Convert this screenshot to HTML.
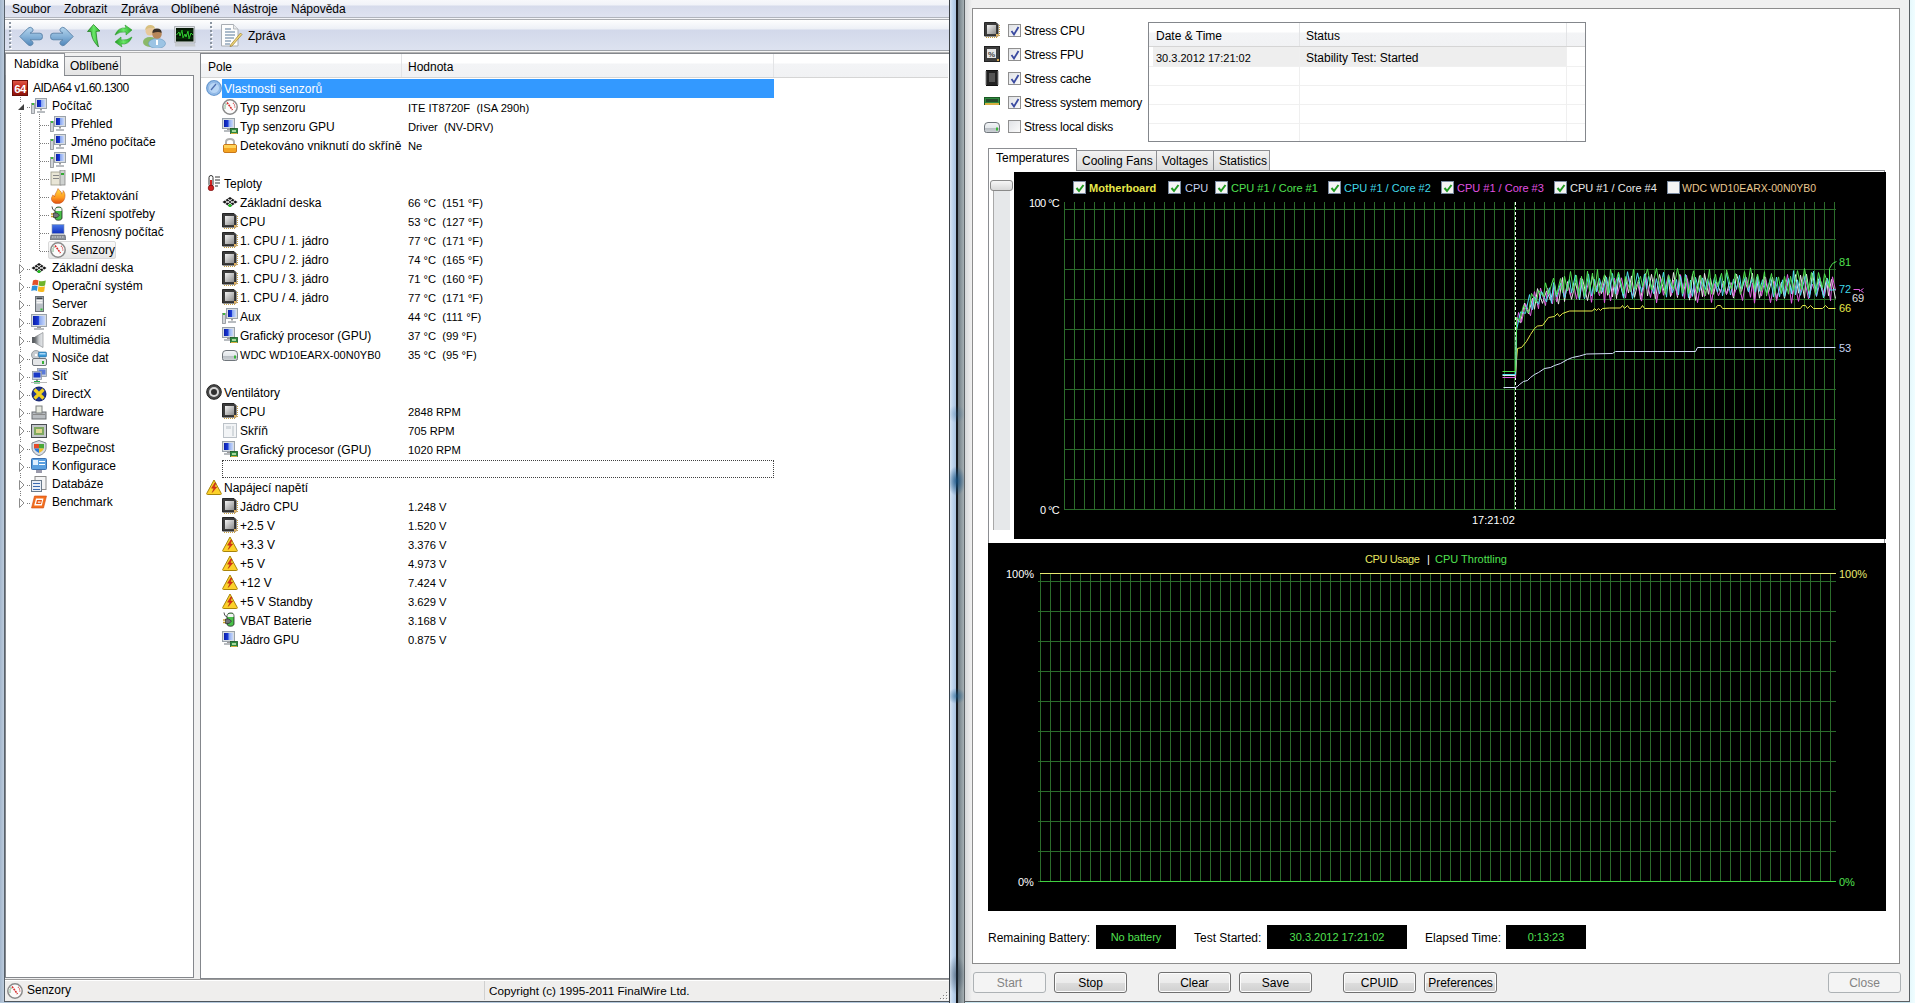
<!DOCTYPE html><html><head><meta charset="utf-8"><style>
*{margin:0;padding:0;box-sizing:border-box}
html,body{width:1915px;height:1003px;overflow:hidden;background:#f0f0f0}
body{position:relative;font-family:"Liberation Sans",sans-serif;font-size:12px;color:#000}
div{position:absolute}
.t{white-space:pre;line-height:15px;font-size:12px}
.s{white-space:pre;line-height:13px;font-size:11px}
.btn{border:1px solid #707070;border-radius:3px;background:linear-gradient(#f2f2f2 0%,#ebebeb 50%,#dddddd 51%,#cfcfcf 100%);text-align:center;line-height:21px;font-size:12px;box-shadow:inset 0 0 0 1px #fcfcfc}
.btnd{border:1px solid #adb2b5;border-radius:3px;background:#f4f4f4;color:#838383;text-align:center;line-height:21px;font-size:12px}
.cb{width:13px;height:13px;border:1px solid #8e8f8f;background:linear-gradient(135deg,#dcdcdc,#fdfdfd)}
.cbk{width:13px;height:13px;border:1px solid #1c1c1c;background:#f4f4f4;box-shadow:inset 0 0 0 1px #c8c8c8}
svg{position:absolute;left:0;top:0}
</style></head><body><div class="" style="left:0px;top:0px;width:4px;height:1003px;background:linear-gradient(90deg,#a3b6cc,#bccbdc)"></div>
<div class="" style="left:4px;top:0px;width:1px;height:1003px;background:#56606a"></div>
<div class="" style="left:5px;top:0px;width:944px;height:17px;background:linear-gradient(#f7f8fb 0,#f1f3f8 5px,#d6dbeb 6px,#dfe3f0 17px)"></div>
<div class="" style="left:5px;top:17px;width:944px;height:1px;background:#b1b5bd"></div>
<div class="" style="left:5px;top:18px;width:944px;height:1px;background:#f4f5f8"></div>
<div class="" style="left:5px;top:19px;width:944px;height:1px;background:#a9acb1"></div>
<div class="t" style="left:12px;top:2px;">Soubor</div>
<div class="t" style="left:64px;top:2px;">Zobrazit</div>
<div class="t" style="left:121px;top:2px;">Zpráva</div>
<div class="t" style="left:171px;top:2px;">Oblíbené</div>
<div class="t" style="left:233px;top:2px;">Nástroje</div>
<div class="t" style="left:291px;top:2px;">Nápověda</div>
<div class="" style="left:5px;top:20px;width:944px;height:30px;background:linear-gradient(#fefefe 0,#edf0f6 9px,#d2d8ea 10px,#dde2f0 30px)"></div>
<div class="" style="left:5px;top:50px;width:944px;height:1px;background:#9ea2a9"></div>
<div class="" style="left:5px;top:51px;width:944px;height:1px;background:#f6f6f6"></div>
<div class="" style="left:5px;top:52px;width:944px;height:1px;background:#b4b4b4"></div>
<div class="t" style="left:248px;top:29px;">Zpráva</div>
<div class="" style="left:64px;top:56px;width:57px;height:20px;background:linear-gradient(#f3f3f3,#e3e3e3);border:1px solid #8e9196;border-bottom:none"></div>
<div class="t" style="left:70px;top:59px;">Oblíbené</div>
<div class="" style="left:5px;top:53px;width:60px;height:23px;background:#fff;border:1px solid #8e9196;border-bottom:none"></div>
<div class="" style="left:5px;top:75px;width:189px;height:903px;background:#fff;border:1px solid #84878c"></div>
<div class="" style="left:6px;top:75px;width:58px;height:1px;background:#fff"></div>
<div class="t" style="left:14px;top:57px;">Nabídka</div>
<div class="" style="left:200px;top:53px;width:749px;height:926px;background:#fff;border:1px solid #84878c;border-right:none"></div>
<div class="" style="left:201px;top:54px;width:747px;height:24px;background:linear-gradient(#ffffff 0,#ffffff 9px,#f3f4f6 10px,#f1f2f4 23px);border-bottom:1px solid #d5d5d5"></div>
<div class="" style="left:401px;top:54px;width:1px;height:23px;background:#e3e4e6"></div>
<div class="" style="left:773px;top:54px;width:1px;height:23px;background:#e3e4e6"></div>
<div class="t" style="left:208px;top:60px;">Pole</div>
<div class="t" style="left:408px;top:60px;">Hodnota</div>
<div class="" style="left:5px;top:979px;width:944px;height:1px;background:#9a9a9a"></div>
<div class="" style="left:5px;top:980px;width:944px;height:1px;background:#ffffff"></div>
<div class="" style="left:5px;top:981px;width:944px;height:20px;background:#efeeed"></div>
<div class="" style="left:484px;top:981px;width:1px;height:19px;background:#d0d0d0"></div>
<div class="t" style="left:27px;top:983px;">Senzory</div>
<div class="t" style="left:489px;top:983px;font-size:11.7px">Copyright (c) 1995-2011 FinalWire Ltd.</div>
<div class="" style="left:4px;top:1001px;width:945px;height:1px;background:#4e565e"></div>
<div class="" style="left:0px;top:1002px;width:949px;height:1px;background:#b4c8dc"></div>
<div class="" style="left:949px;top:0px;width:1px;height:1003px;background:#3a4046"></div>
<div class="" style="left:950px;top:0px;width:6px;height:1003px;background:linear-gradient(90deg,#dbe8f6,#bcd3ec 50%,#a9c2de)"></div>
<div class="" style="left:956px;top:0px;width:2px;height:1003px;background:#15181b"></div>
<div class="" style="left:958px;top:0px;width:6px;height:1003px;background:linear-gradient(90deg,#6d7a82,#a6b0b4)"></div>
<div class="" style="left:964px;top:0px;width:1px;height:1003px;background:#5c6266"></div>
<div class="" style="left:949px;top:466px;width:15px;height:30px;background:radial-gradient(ellipse 60% 50% at 50% 50%,rgba(20,80,130,0.85),rgba(20,80,130,0) 100%)"></div>
<div class="" style="left:949px;top:688px;width:15px;height:16px;background:radial-gradient(ellipse 60% 50% at 50% 50%,rgba(20,90,140,0.6),rgba(20,90,140,0) 100%)"></div>
<div class="" style="left:949px;top:405px;width:15px;height:18px;background:radial-gradient(ellipse 60% 50% at 50% 50%,rgba(40,100,150,0.3),rgba(40,100,150,0) 100%)"></div>
<div class="" style="left:949px;top:955px;width:15px;height:40px;background:radial-gradient(ellipse 60% 50% at 50% 50%,rgba(30,50,70,0.5),rgba(30,50,70,0) 100%)"></div>
<div style="left:20px;top:97px;width:1px;height:405px;background:repeating-linear-gradient(#7c7c7c 0 1px,transparent 1px 2px)"></div>
<div style="left:39px;top:114px;width:1px;height:138px;background:repeating-linear-gradient(#7c7c7c 0 1px,transparent 1px 2px)"></div>
<div class="" style="left:48px;top:241px;width:68px;height:18px;border:1px solid #d9d9d9;border-radius:2px;background:linear-gradient(#fafafa,#e6e6e6)"></div>
<svg style="left:12px;top:80px" width="16" height="16" viewBox="0 0 16 16"><defs><linearGradient id="ag64" x1="0" y1="0" x2="0" y2="1"><stop offset="0" stop-color="#e05a4a"/><stop offset="0.45" stop-color="#c0281c"/><stop offset="1" stop-color="#8a1208"/></linearGradient></defs><rect x="0.5" y="0.5" width="15" height="15" fill="url(#ag64)" stroke="#6a0e08"/><text x="8" y="13" font-family="Liberation Sans" font-weight="bold" font-size="11.5" fill="#fff" text-anchor="middle" letter-spacing="-0.6">64</text></svg>
<div class="t" style="left:33px;top:81px;letter-spacing:-0.5px">AIDA64 v1.60.1300</div>
<div style="left:21px;top:107px;width:10px;height:1px;background:repeating-linear-gradient(90deg,#7c7c7c 0 1px,transparent 1px 2px)"></div>
<svg style="left:31px;top:98px" width="16" height="16" viewBox="0 0 16 16"><defs><linearGradient id="scr2" x1="0" y1="0" x2="1" y2="0"><stop offset="0" stop-color="#0a1ea8"/><stop offset="0.45" stop-color="#1a3ad8"/><stop offset="0.55" stop-color="#8aa8f0"/><stop offset="1" stop-color="#c8d8fa"/></linearGradient></defs><rect x="0.5" y="5.5" width="3" height="10" fill="#d0d4d8" stroke="#8a9096" stroke-width="0.8"/><rect x="1" y="5" width="2" height="2" fill="#3cb83c"/><rect x="4.5" y="0.5" width="11" height="10" fill="#d8dde2" stroke="#9aa2aa" stroke-width="1"/><rect x="6" y="2" width="8" height="7" fill="url(#scr2)"/><rect x="9" y="11" width="2" height="1.5" fill="#9a9a9a"/><rect x="6" y="13" width="8" height="2" fill="#b8bcc0"/></svg>
<div class="t" style="left:52px;top:99px;">Počítač</div>
<svg style="left:16px;top:102px" width="10" height="10" viewBox="0 0 10 10"><rect width="10" height="10" fill="#fff"/><path d="M8 2 V8 H2Z" fill="#404040"/></svg>
<div style="left:40px;top:125px;width:10px;height:1px;background:repeating-linear-gradient(90deg,#7c7c7c 0 1px,transparent 1px 2px)"></div>
<svg style="left:50px;top:116px" width="16" height="16" viewBox="0 0 16 16"><defs><linearGradient id="scr2" x1="0" y1="0" x2="1" y2="0"><stop offset="0" stop-color="#0a1ea8"/><stop offset="0.45" stop-color="#1a3ad8"/><stop offset="0.55" stop-color="#8aa8f0"/><stop offset="1" stop-color="#c8d8fa"/></linearGradient></defs><rect x="0.5" y="5.5" width="3" height="10" fill="#d0d4d8" stroke="#8a9096" stroke-width="0.8"/><rect x="1" y="5" width="2" height="2" fill="#3cb83c"/><rect x="4.5" y="0.5" width="11" height="10" fill="#d8dde2" stroke="#9aa2aa" stroke-width="1"/><rect x="6" y="2" width="8" height="7" fill="url(#scr2)"/><rect x="9" y="11" width="2" height="1.5" fill="#9a9a9a"/><rect x="6" y="13" width="8" height="2" fill="#b8bcc0"/></svg>
<div class="t" style="left:71px;top:117px;">Přehled</div>
<div style="left:40px;top:143px;width:10px;height:1px;background:repeating-linear-gradient(90deg,#7c7c7c 0 1px,transparent 1px 2px)"></div>
<svg style="left:50px;top:134px" width="16" height="16" viewBox="0 0 16 16"><defs><linearGradient id="scr2" x1="0" y1="0" x2="1" y2="0"><stop offset="0" stop-color="#0a1ea8"/><stop offset="0.45" stop-color="#1a3ad8"/><stop offset="0.55" stop-color="#8aa8f0"/><stop offset="1" stop-color="#c8d8fa"/></linearGradient></defs><rect x="0.5" y="5.5" width="3" height="10" fill="#d0d4d8" stroke="#8a9096" stroke-width="0.8"/><rect x="1" y="5" width="2" height="2" fill="#3cb83c"/><rect x="4.5" y="0.5" width="11" height="10" fill="#d8dde2" stroke="#9aa2aa" stroke-width="1"/><rect x="6" y="2" width="8" height="7" fill="url(#scr2)"/><rect x="9" y="11" width="2" height="1.5" fill="#9a9a9a"/><rect x="6" y="13" width="8" height="2" fill="#b8bcc0"/></svg>
<div class="t" style="left:71px;top:135px;">Jméno počítače</div>
<div style="left:40px;top:161px;width:10px;height:1px;background:repeating-linear-gradient(90deg,#7c7c7c 0 1px,transparent 1px 2px)"></div>
<svg style="left:50px;top:152px" width="16" height="16" viewBox="0 0 16 16"><defs><linearGradient id="scr2" x1="0" y1="0" x2="1" y2="0"><stop offset="0" stop-color="#0a1ea8"/><stop offset="0.45" stop-color="#1a3ad8"/><stop offset="0.55" stop-color="#8aa8f0"/><stop offset="1" stop-color="#c8d8fa"/></linearGradient></defs><rect x="0.5" y="5.5" width="3" height="10" fill="#d0d4d8" stroke="#8a9096" stroke-width="0.8"/><rect x="1" y="5" width="2" height="2" fill="#3cb83c"/><rect x="4.5" y="0.5" width="11" height="10" fill="#d8dde2" stroke="#9aa2aa" stroke-width="1"/><rect x="6" y="2" width="8" height="7" fill="url(#scr2)"/><rect x="9" y="11" width="2" height="1.5" fill="#9a9a9a"/><rect x="6" y="13" width="8" height="2" fill="#b8bcc0"/></svg>
<div class="t" style="left:71px;top:153px;">DMI</div>
<div style="left:40px;top:179px;width:10px;height:1px;background:repeating-linear-gradient(90deg,#7c7c7c 0 1px,transparent 1px 2px)"></div>
<svg style="left:50px;top:170px" width="16" height="16" viewBox="0 0 16 16"><rect x="1" y="2" width="10" height="13" fill="#e9e6d6" stroke="#9a9a88" stroke-width="0.8"/><rect x="3" y="5" width="6" height="1" fill="#888"/><rect x="3" y="8" width="6" height="1" fill="#888"/><rect x="10" y="0" width="5" height="15" fill="#cfd2d0" stroke="#888" stroke-width="0.8"/><rect x="11" y="3" width="3" height="2" fill="#3a3"/></svg>
<div class="t" style="left:71px;top:171px;">IPMI</div>
<div style="left:40px;top:197px;width:10px;height:1px;background:repeating-linear-gradient(90deg,#7c7c7c 0 1px,transparent 1px 2px)"></div>
<svg style="left:50px;top:188px" width="16" height="16" viewBox="0 0 16 16"><defs><linearGradient id="fl" x1="0" y1="0" x2="0" y2="1"><stop offset="0" stop-color="#ffe040"/><stop offset="0.6" stop-color="#ff9a20"/><stop offset="1" stop-color="#e05010"/></linearGradient></defs><path d="M8 0.5 C9 3 12 3 11.5 6 C13 5 13.5 3.5 13 2.5 C15.5 5 15.5 9 14 12 C12.5 15 9 16 6 15.5 C3 15 1 12.5 1.5 10 C2 8 3 8 2.5 7 C4 7.5 4.5 8.5 4.5 9 C4.5 6 7 4 8 0.5Z" fill="url(#fl)" stroke="#c04810" stroke-width="0.5"/></svg>
<div class="t" style="left:71px;top:189px;">Přetaktování</div>
<div style="left:40px;top:215px;width:10px;height:1px;background:repeating-linear-gradient(90deg,#7c7c7c 0 1px,transparent 1px 2px)"></div>
<svg style="left:50px;top:206px" width="16" height="16" viewBox="0 0 16 16"><path d="M9 1 C5 1 5 3 5 6 V12 C5 15 12 15 12 12 V6 C12 3 12 1 9 1Z" fill="#48c048" stroke="#222" stroke-width="0.8"/><path d="M5.5 2.5 C7 1.5 11 1.5 11.5 2.5 V5 H5.5Z" fill="#f4f4f4"/><path d="M1 8 H4 M1 10.5 H4" stroke="#c8a030" stroke-width="1.4"/><path d="M3.5 7 H7 L9.5 9.2 L7 11.5 H3.5Z" fill="#707478" stroke="#222" stroke-width="0.6"/><path d="M2 0.5 Q2 4 5 5" fill="none" stroke="#222" stroke-width="0.8"/></svg>
<div class="t" style="left:71px;top:207px;">Řízení spotřeby</div>
<div style="left:40px;top:233px;width:10px;height:1px;background:repeating-linear-gradient(90deg,#7c7c7c 0 1px,transparent 1px 2px)"></div>
<svg style="left:50px;top:224px" width="16" height="16" viewBox="0 0 16 16"><defs><linearGradient id="lap" x1="0" y1="0" x2="0" y2="1"><stop offset="0" stop-color="#4a7ae8"/><stop offset="1" stop-color="#1030c0"/></linearGradient></defs><rect x="2" y="0.5" width="12" height="9" fill="url(#lap)" stroke="#8a98b0" stroke-width="0.6"/><path d="M1 11 H15 L16 15.5 H0Z" fill="#8a9098" stroke="#50565c" stroke-width="0.6"/><path d="M2 13 H14" stroke="#d8d8d8" stroke-width="1" stroke-dasharray="1.5,1"/></svg>
<div class="t" style="left:71px;top:225px;">Přenosný počítač</div>
<div style="left:40px;top:251px;width:10px;height:1px;background:repeating-linear-gradient(90deg,#7c7c7c 0 1px,transparent 1px 2px)"></div>
<svg style="left:50px;top:242px" width="16" height="16" viewBox="0 0 16 16"><circle cx="8" cy="8" r="7.2" fill="#fbfbfb" stroke="#8a8a8a" stroke-width="1.5"/><path d="M3.2 9.5 A5 5 0 0 1 4.5 4.5" fill="none" stroke="#3a8a4a" stroke-width="1.2" stroke-dasharray="1,1"/><path d="M11 4 A5 5 0 0 1 12.8 8.5" fill="none" stroke="#d04040" stroke-width="1.2" stroke-dasharray="1,1"/><path d="M5 3.5 L10.5 11" stroke="#d83030" stroke-width="1.6" stroke-dasharray="2,0.8"/></svg>
<div class="t" style="left:71px;top:243px;">Senzory</div>
<div style="left:21px;top:269px;width:10px;height:1px;background:repeating-linear-gradient(90deg,#7c7c7c 0 1px,transparent 1px 2px)"></div>
<svg style="left:31px;top:260px" width="16" height="16" viewBox="0 0 16 16"><path d="M0.5 8 L8 3 L15.5 8 L8 13Z" fill="#151515"/><path d="M3 6.3 L10.5 11.3 M5.5 4.7 L13 9.7 M5.5 11.3 L13 6.3 M3 9.7 L10.5 4.7" stroke="#e8e8e8" stroke-width="1"/><circle cx="8" cy="11.5" r="1.6" fill="#22c022"/></svg>
<div class="t" style="left:52px;top:261px;">Základní deska</div>
<svg style="left:17px;top:263px" width="9" height="11" viewBox="0 0 9 11"><rect x="0" y="0" width="9" height="11" fill="#fff"/><path d="M2.5 1.5 L7 6 L2.5 10.5Z" fill="#fff" stroke="#8c8c8c" stroke-width="1"/></svg>
<div style="left:21px;top:287px;width:10px;height:1px;background:repeating-linear-gradient(90deg,#7c7c7c 0 1px,transparent 1px 2px)"></div>
<svg style="left:31px;top:278px" width="16" height="16" viewBox="0 0 16 16"><path d="M2 2.5 Q4.5 1 7.5 2.5 L6.8 7.3 Q4 6 1.2 7.3Z" fill="#e2512a"/><path d="M8.2 2.8 Q11 4 14.8 2.5 L14 7.6 Q10.8 8.8 7.5 7.5Z" fill="#6fb42c"/><path d="M1 8 Q3.8 6.8 6.6 8 L6 13 Q3.5 11.7 0.3 13Z" fill="#2d8fd8"/><path d="M7.4 8.3 Q10.5 9.5 13.9 8.3 L13.2 13.4 Q10 14.6 6.8 13.2Z" fill="#f6b81c"/></svg>
<div class="t" style="left:52px;top:279px;">Operační systém</div>
<svg style="left:17px;top:281px" width="9" height="11" viewBox="0 0 9 11"><rect x="0" y="0" width="9" height="11" fill="#fff"/><path d="M2.5 1.5 L7 6 L2.5 10.5Z" fill="#fff" stroke="#8c8c8c" stroke-width="1"/></svg>
<div style="left:21px;top:305px;width:10px;height:1px;background:repeating-linear-gradient(90deg,#7c7c7c 0 1px,transparent 1px 2px)"></div>
<svg style="left:31px;top:296px" width="16" height="16" viewBox="0 0 16 16"><rect x="4.5" y="0.5" width="8" height="15" fill="#b8bec4" stroke="#6a7076" stroke-width="1"/><rect x="5.5" y="1.5" width="6" height="1.5" fill="#3a4046"/><rect x="5.5" y="4" width="6" height="1.5" fill="#f4f4f4"/><rect x="5.5" y="6" width="6" height="1.5" fill="#f4f4f4"/><rect x="9.5" y="12.5" width="2" height="2" fill="#38c038"/></svg>
<div class="t" style="left:52px;top:297px;">Server</div>
<svg style="left:17px;top:299px" width="9" height="11" viewBox="0 0 9 11"><rect x="0" y="0" width="9" height="11" fill="#fff"/><path d="M2.5 1.5 L7 6 L2.5 10.5Z" fill="#fff" stroke="#8c8c8c" stroke-width="1"/></svg>
<div style="left:21px;top:323px;width:10px;height:1px;background:repeating-linear-gradient(90deg,#7c7c7c 0 1px,transparent 1px 2px)"></div>
<svg style="left:31px;top:314px" width="16" height="16" viewBox="0 0 16 16"><defs><linearGradient id="scr" x1="0" y1="0" x2="1" y2="0"><stop offset="0" stop-color="#0a1ea8"/><stop offset="0.45" stop-color="#1a3ad8"/><stop offset="0.55" stop-color="#8aa8f0"/><stop offset="1" stop-color="#c8d8fa"/></linearGradient></defs><rect x="0.5" y="0.5" width="15" height="12" fill="#d8dde2" stroke="#9aa2aa" stroke-width="1"/><rect x="2" y="2" width="12" height="9" fill="url(#scr)"/><rect x="6" y="13" width="4" height="1" fill="#9a9a9a"/><rect x="3" y="14" width="10" height="2" fill="#b8bcc0"/></svg>
<div class="t" style="left:52px;top:315px;">Zobrazení</div>
<svg style="left:17px;top:317px" width="9" height="11" viewBox="0 0 9 11"><rect x="0" y="0" width="9" height="11" fill="#fff"/><path d="M2.5 1.5 L7 6 L2.5 10.5Z" fill="#fff" stroke="#8c8c8c" stroke-width="1"/></svg>
<div style="left:21px;top:341px;width:10px;height:1px;background:repeating-linear-gradient(90deg,#7c7c7c 0 1px,transparent 1px 2px)"></div>
<svg style="left:31px;top:332px" width="16" height="16" viewBox="0 0 16 16"><defs><linearGradient id="spk" x1="0" y1="0" x2="1" y2="0"><stop offset="0" stop-color="#606468"/><stop offset="0.5" stop-color="#c8ccd0"/><stop offset="1" stop-color="#e8eaec"/></linearGradient></defs><rect x="1" y="5" width="4" height="6" fill="#5a5e62"/><path d="M4 5 L12 0.5 V15.5 L4 11Z" fill="url(#spk)" stroke="#7a7e82" stroke-width="0.6"/></svg>
<div class="t" style="left:52px;top:333px;">Multimédia</div>
<svg style="left:17px;top:335px" width="9" height="11" viewBox="0 0 9 11"><rect x="0" y="0" width="9" height="11" fill="#fff"/><path d="M2.5 1.5 L7 6 L2.5 10.5Z" fill="#fff" stroke="#8c8c8c" stroke-width="1"/></svg>
<div style="left:21px;top:359px;width:10px;height:1px;background:repeating-linear-gradient(90deg,#7c7c7c 0 1px,transparent 1px 2px)"></div>
<svg style="left:31px;top:350px" width="16" height="16" viewBox="0 0 16 16"><circle cx="5" cy="5" r="4.5" fill="#c8ccd0" stroke="#8a9096" stroke-width="0.8"/><circle cx="5" cy="5" r="1.2" fill="#fff"/><rect x="7.5" y="2" width="8" height="5" rx="1" fill="#3a9ad8" stroke="#2a6a9a" stroke-width="0.6"/><rect x="8.5" y="3" width="6" height="1.5" fill="#a8d8f8"/><rect x="1.5" y="8.5" width="14" height="7" rx="1.5" fill="#e4e6e8" stroke="#70767c" stroke-width="1"/><rect x="11" y="11" width="2" height="3" fill="#38b038"/></svg>
<div class="t" style="left:52px;top:351px;">Nosiče dat</div>
<svg style="left:17px;top:353px" width="9" height="11" viewBox="0 0 9 11"><rect x="0" y="0" width="9" height="11" fill="#fff"/><path d="M2.5 1.5 L7 6 L2.5 10.5Z" fill="#fff" stroke="#8c8c8c" stroke-width="1"/></svg>
<div style="left:21px;top:377px;width:10px;height:1px;background:repeating-linear-gradient(90deg,#7c7c7c 0 1px,transparent 1px 2px)"></div>
<svg style="left:31px;top:368px" width="16" height="16" viewBox="0 0 16 16"><rect x="6.5" y="0.5" width="9" height="8" fill="#c8d0dc" stroke="#8a96a4" stroke-width="0.8"/><rect x="7.5" y="1.5" width="7" height="5" fill="#5a7ad8"/><rect x="1.5" y="3.5" width="9" height="8" fill="#d0d8e4" stroke="#8a96a4" stroke-width="0.8"/><rect x="2.5" y="4.5" width="7" height="5" fill="#1a3ac8"/><rect x="5" y="11.5" width="2" height="2" fill="#888"/><rect x="3" y="13" width="6" height="2.5" fill="#22a848"/><path d="M0 14.5 H16" stroke="#b8b8b8" stroke-width="1"/></svg>
<div class="t" style="left:52px;top:369px;">Síť</div>
<svg style="left:17px;top:371px" width="9" height="11" viewBox="0 0 9 11"><rect x="0" y="0" width="9" height="11" fill="#fff"/><path d="M2.5 1.5 L7 6 L2.5 10.5Z" fill="#fff" stroke="#8c8c8c" stroke-width="1"/></svg>
<div style="left:21px;top:395px;width:10px;height:1px;background:repeating-linear-gradient(90deg,#7c7c7c 0 1px,transparent 1px 2px)"></div>
<svg style="left:31px;top:386px" width="16" height="16" viewBox="0 0 16 16"><circle cx="8" cy="8" r="7.5" fill="#1a2a78"/><circle cx="8" cy="8" r="6" fill="#223a9a"/><path d="M3.5 3.5 L12.5 12.5 M12.5 3.5 L3.5 12.5" stroke="#f0d020" stroke-width="3.2"/></svg>
<div class="t" style="left:52px;top:387px;">DirectX</div>
<svg style="left:17px;top:389px" width="9" height="11" viewBox="0 0 9 11"><rect x="0" y="0" width="9" height="11" fill="#fff"/><path d="M2.5 1.5 L7 6 L2.5 10.5Z" fill="#fff" stroke="#8c8c8c" stroke-width="1"/></svg>
<div style="left:21px;top:413px;width:10px;height:1px;background:repeating-linear-gradient(90deg,#7c7c7c 0 1px,transparent 1px 2px)"></div>
<svg style="left:31px;top:404px" width="16" height="16" viewBox="0 0 16 16"><rect x="1" y="8" width="14" height="7" fill="#b8bcc0" stroke="#6a6e72" stroke-width="1"/><rect x="5" y="2" width="6" height="7" fill="#e8ebe0" stroke="#7d8080" stroke-width="1"/><rect x="2" y="10" width="12" height="1" fill="#888"/></svg>
<div class="t" style="left:52px;top:405px;">Hardware</div>
<svg style="left:17px;top:407px" width="9" height="11" viewBox="0 0 9 11"><rect x="0" y="0" width="9" height="11" fill="#fff"/><path d="M2.5 1.5 L7 6 L2.5 10.5Z" fill="#fff" stroke="#8c8c8c" stroke-width="1"/></svg>
<div style="left:21px;top:431px;width:10px;height:1px;background:repeating-linear-gradient(90deg,#7c7c7c 0 1px,transparent 1px 2px)"></div>
<svg style="left:31px;top:422px" width="16" height="16" viewBox="0 0 16 16"><rect x="0.5" y="2.5" width="15" height="13" fill="#c4c8cc" stroke="#4a4e52" stroke-width="1"/><rect x="3" y="5" width="10" height="8" fill="#7fa860"/><rect x="5" y="7" width="6" height="4" fill="#e0d890"/></svg>
<div class="t" style="left:52px;top:423px;">Software</div>
<svg style="left:17px;top:425px" width="9" height="11" viewBox="0 0 9 11"><rect x="0" y="0" width="9" height="11" fill="#fff"/><path d="M2.5 1.5 L7 6 L2.5 10.5Z" fill="#fff" stroke="#8c8c8c" stroke-width="1"/></svg>
<div style="left:21px;top:449px;width:10px;height:1px;background:repeating-linear-gradient(90deg,#7c7c7c 0 1px,transparent 1px 2px)"></div>
<svg style="left:31px;top:440px" width="16" height="16" viewBox="0 0 16 16"><path d="M8 0.5 L15 3 V8 C15 12 11 15 8 15.5 C5 15 1 12 1 8 V3Z" fill="#d8dde4" stroke="#7d8690" stroke-width="1"/><path d="M3 4 H8 V8.5 H3Z" fill="#e64a2a"/><path d="M8 4 H13 V8.5 H8Z" fill="#4aa83a"/><path d="M3 8.5 H8 V13 Q4 11 3 8.5Z" fill="#2a7ad8"/><path d="M8 8.5 H13 Q12 11 8 13Z" fill="#f2c028"/></svg>
<div class="t" style="left:52px;top:441px;">Bezpečnost</div>
<svg style="left:17px;top:443px" width="9" height="11" viewBox="0 0 9 11"><rect x="0" y="0" width="9" height="11" fill="#fff"/><path d="M2.5 1.5 L7 6 L2.5 10.5Z" fill="#fff" stroke="#8c8c8c" stroke-width="1"/></svg>
<div style="left:21px;top:467px;width:10px;height:1px;background:repeating-linear-gradient(90deg,#7c7c7c 0 1px,transparent 1px 2px)"></div>
<svg style="left:31px;top:458px" width="16" height="16" viewBox="0 0 16 16"><rect x="0.5" y="0.5" width="15" height="11" rx="1" fill="#5ba0e0" stroke="#3a70b0" stroke-width="1"/><rect x="2" y="2" width="5" height="5" fill="#dfefff"/><rect x="8" y="3" width="6" height="1" fill="#fff"/><rect x="8" y="6" width="6" height="1" fill="#fff"/><rect x="5" y="12" width="6" height="3" fill="#99a"/></svg>
<div class="t" style="left:52px;top:459px;">Konfigurace</div>
<svg style="left:17px;top:461px" width="9" height="11" viewBox="0 0 9 11"><rect x="0" y="0" width="9" height="11" fill="#fff"/><path d="M2.5 1.5 L7 6 L2.5 10.5Z" fill="#fff" stroke="#8c8c8c" stroke-width="1"/></svg>
<div style="left:21px;top:485px;width:10px;height:1px;background:repeating-linear-gradient(90deg,#7c7c7c 0 1px,transparent 1px 2px)"></div>
<svg style="left:31px;top:476px" width="16" height="16" viewBox="0 0 16 16"><rect x="4" y="0.5" width="11" height="13" fill="#f4f4f4" stroke="#8a8a8a" stroke-width="1"/><rect x="0.5" y="4.5" width="10" height="11" fill="#e8eef6" stroke="#6a7a8a" stroke-width="1"/><rect x="2" y="7" width="7" height="1" fill="#3a6ab0"/><rect x="2" y="10" width="7" height="1" fill="#3a6ab0"/><rect x="2" y="13" width="7" height="1" fill="#3a6ab0"/></svg>
<div class="t" style="left:52px;top:477px;">Databáze</div>
<svg style="left:17px;top:479px" width="9" height="11" viewBox="0 0 9 11"><rect x="0" y="0" width="9" height="11" fill="#fff"/><path d="M2.5 1.5 L7 6 L2.5 10.5Z" fill="#fff" stroke="#8c8c8c" stroke-width="1"/></svg>
<div style="left:21px;top:503px;width:10px;height:1px;background:repeating-linear-gradient(90deg,#7c7c7c 0 1px,transparent 1px 2px)"></div>
<svg style="left:31px;top:494px" width="16" height="16" viewBox="0 0 16 16"><path d="M3.5 2 H15.5 L12.5 14 H0.5Z" fill="#f36f1e" stroke="#d04a10" stroke-width="0.6"/><path d="M5 4.5 H12.5 L10.8 11.5 H3.2Z" fill="#fff"/><path d="M6 6 H11 L10 10 H5Z" fill="#e85a18"/><rect x="6.8" y="7.5" width="2.8" height="1.2" fill="#fff"/></svg>
<div class="t" style="left:52px;top:495px;">Benchmark</div>
<svg style="left:17px;top:497px" width="9" height="11" viewBox="0 0 9 11"><rect x="0" y="0" width="9" height="11" fill="#fff"/><path d="M2.5 1.5 L7 6 L2.5 10.5Z" fill="#fff" stroke="#8c8c8c" stroke-width="1"/></svg>
<div class="" style="left:222px;top:79px;width:552px;height:19px;background:#3399ff"></div>
<svg style="left:206px;top:80px" width="16" height="16" viewBox="0 0 16 16"><circle cx="8" cy="8" r="7.3" fill="#9cc4f0" stroke="#6a9ad0" stroke-width="1.3"/><circle cx="8" cy="8" r="5.5" fill="#b8d6f6" stroke="#80a8d8" stroke-width="0.6"/><path d="M5 10 L10 4" stroke="#5070b0" stroke-width="1.3"/></svg>
<div class="t" style="left:224px;top:82px;color:#fff">Vlastnosti senzorů</div>
<svg style="left:222px;top:99px" width="16" height="16" viewBox="0 0 16 16"><circle cx="8" cy="8" r="7.2" fill="#fbfbfb" stroke="#8a8a8a" stroke-width="1.5"/><path d="M3.2 9.5 A5 5 0 0 1 4.5 4.5" fill="none" stroke="#3a8a4a" stroke-width="1.2" stroke-dasharray="1,1"/><path d="M11 4 A5 5 0 0 1 12.8 8.5" fill="none" stroke="#d04040" stroke-width="1.2" stroke-dasharray="1,1"/><path d="M5 3.5 L10.5 11" stroke="#d83030" stroke-width="1.6" stroke-dasharray="2,0.8"/></svg>
<div class="t" style="left:240px;top:101px;">Typ senzoru</div>
<div class="t" style="left:408px;top:101px;font-size:11.2px">ITE IT8720F  (ISA 290h)</div>
<svg style="left:222px;top:118px" width="16" height="16" viewBox="0 0 16 16"><rect x="0.5" y="0.5" width="12" height="10" fill="#d8dde2" stroke="#9aa2aa" stroke-width="1"/><rect x="2" y="2" width="9" height="7" fill="url(#scr2)"/><rect x="5" y="11" width="3" height="1" fill="#9a9a9a"/><rect x="2" y="12" width="8" height="2" fill="#b8bcc0"/><rect x="8.5" y="10.5" width="7" height="5" fill="#2e8a3e" stroke="#1a5a24" stroke-width="0.8"/><rect x="10" y="12" width="4" height="2" fill="#a8d8a0"/><rect x="9" y="15" width="6" height="1" fill="#d8b040"/></svg>
<div class="t" style="left:240px;top:120px;">Typ senzoru GPU</div>
<div class="t" style="left:408px;top:120px;font-size:11.2px">Driver  (NV-DRV)</div>
<svg style="left:222px;top:137px" width="16" height="16" viewBox="0 0 16 16"><path d="M4 8 V5 C4 1 12 1 12 5 V8" fill="none" stroke="#b0b0b0" stroke-width="2"/><rect x="1.5" y="7.5" width="13" height="8" rx="1.5" fill="#f5a623" stroke="#c8781a" stroke-width="1"/><rect x="2" y="8" width="12" height="3" fill="#ffd35a"/></svg>
<div class="t" style="left:240px;top:139px;">Detekováno vniknutí do skříně</div>
<div class="t" style="left:408px;top:139px;font-size:11.2px">Ne</div>
<svg style="left:206px;top:175px" width="16" height="16" viewBox="0 0 16 16"><rect x="3" y="0.5" width="4" height="11" rx="2" fill="#fff" stroke="#333" stroke-width="1"/><rect x="4" y="5" width="2" height="7" fill="#d02020"/><circle cx="5" cy="13" r="2.8" fill="#d02020" stroke="#600" stroke-width="0.6"/><path d="M9 2 H14 M9 5 H14 M9 8 H14 M9 11 H12" stroke="#333" stroke-width="1"/></svg>
<div class="t" style="left:224px;top:177px;">Teploty</div>
<svg style="left:222px;top:194px" width="16" height="16" viewBox="0 0 16 16"><path d="M0.5 8 L8 3 L15.5 8 L8 13Z" fill="#151515"/><path d="M3 6.3 L10.5 11.3 M5.5 4.7 L13 9.7 M5.5 11.3 L13 6.3 M3 9.7 L10.5 4.7" stroke="#e8e8e8" stroke-width="1"/><circle cx="8" cy="11.5" r="1.6" fill="#22c022"/></svg>
<div class="t" style="left:240px;top:196px;">Základní deska</div>
<div class="t" style="left:408px;top:196px;font-size:11.2px">66 °C  (151 °F)</div>
<svg style="left:222px;top:213px" width="16" height="16" viewBox="0 0 16 16"><defs><linearGradient id="cg" x1="0" y1="0" x2="1" y2="1"><stop offset="0" stop-color="#f4f4f4"/><stop offset="1" stop-color="#8c8c8c"/></linearGradient></defs><path d="M0.5 0.5 H12 L14 2.5 V14 H0.5Z" fill="#3c3c3c" stroke="#262626" stroke-width="1"/><rect x="3" y="3" width="9" height="9" fill="url(#cg)"/><path d="M15.5 3 V14" stroke="#c8a040" stroke-width="1" stroke-dasharray="1,1"/><path d="M2 15.5 H14" stroke="#c8a040" stroke-width="1" stroke-dasharray="1,1"/><rect x="12" y="12" width="2.5" height="2.5" fill="#e0b060"/></svg>
<div class="t" style="left:240px;top:215px;">CPU</div>
<div class="t" style="left:408px;top:215px;font-size:11.2px">53 °C  (127 °F)</div>
<svg style="left:222px;top:232px" width="16" height="16" viewBox="0 0 16 16"><defs><linearGradient id="cg" x1="0" y1="0" x2="1" y2="1"><stop offset="0" stop-color="#f4f4f4"/><stop offset="1" stop-color="#8c8c8c"/></linearGradient></defs><path d="M0.5 0.5 H12 L14 2.5 V14 H0.5Z" fill="#3c3c3c" stroke="#262626" stroke-width="1"/><rect x="3" y="3" width="9" height="9" fill="url(#cg)"/><path d="M15.5 3 V14" stroke="#c8a040" stroke-width="1" stroke-dasharray="1,1"/><path d="M2 15.5 H14" stroke="#c8a040" stroke-width="1" stroke-dasharray="1,1"/><rect x="12" y="12" width="2.5" height="2.5" fill="#e0b060"/></svg>
<div class="t" style="left:240px;top:234px;">1. CPU / 1. jádro</div>
<div class="t" style="left:408px;top:234px;font-size:11.2px">77 °C  (171 °F)</div>
<svg style="left:222px;top:251px" width="16" height="16" viewBox="0 0 16 16"><defs><linearGradient id="cg" x1="0" y1="0" x2="1" y2="1"><stop offset="0" stop-color="#f4f4f4"/><stop offset="1" stop-color="#8c8c8c"/></linearGradient></defs><path d="M0.5 0.5 H12 L14 2.5 V14 H0.5Z" fill="#3c3c3c" stroke="#262626" stroke-width="1"/><rect x="3" y="3" width="9" height="9" fill="url(#cg)"/><path d="M15.5 3 V14" stroke="#c8a040" stroke-width="1" stroke-dasharray="1,1"/><path d="M2 15.5 H14" stroke="#c8a040" stroke-width="1" stroke-dasharray="1,1"/><rect x="12" y="12" width="2.5" height="2.5" fill="#e0b060"/></svg>
<div class="t" style="left:240px;top:253px;">1. CPU / 2. jádro</div>
<div class="t" style="left:408px;top:253px;font-size:11.2px">74 °C  (165 °F)</div>
<svg style="left:222px;top:270px" width="16" height="16" viewBox="0 0 16 16"><defs><linearGradient id="cg" x1="0" y1="0" x2="1" y2="1"><stop offset="0" stop-color="#f4f4f4"/><stop offset="1" stop-color="#8c8c8c"/></linearGradient></defs><path d="M0.5 0.5 H12 L14 2.5 V14 H0.5Z" fill="#3c3c3c" stroke="#262626" stroke-width="1"/><rect x="3" y="3" width="9" height="9" fill="url(#cg)"/><path d="M15.5 3 V14" stroke="#c8a040" stroke-width="1" stroke-dasharray="1,1"/><path d="M2 15.5 H14" stroke="#c8a040" stroke-width="1" stroke-dasharray="1,1"/><rect x="12" y="12" width="2.5" height="2.5" fill="#e0b060"/></svg>
<div class="t" style="left:240px;top:272px;">1. CPU / 3. jádro</div>
<div class="t" style="left:408px;top:272px;font-size:11.2px">71 °C  (160 °F)</div>
<svg style="left:222px;top:289px" width="16" height="16" viewBox="0 0 16 16"><defs><linearGradient id="cg" x1="0" y1="0" x2="1" y2="1"><stop offset="0" stop-color="#f4f4f4"/><stop offset="1" stop-color="#8c8c8c"/></linearGradient></defs><path d="M0.5 0.5 H12 L14 2.5 V14 H0.5Z" fill="#3c3c3c" stroke="#262626" stroke-width="1"/><rect x="3" y="3" width="9" height="9" fill="url(#cg)"/><path d="M15.5 3 V14" stroke="#c8a040" stroke-width="1" stroke-dasharray="1,1"/><path d="M2 15.5 H14" stroke="#c8a040" stroke-width="1" stroke-dasharray="1,1"/><rect x="12" y="12" width="2.5" height="2.5" fill="#e0b060"/></svg>
<div class="t" style="left:240px;top:291px;">1. CPU / 4. jádro</div>
<div class="t" style="left:408px;top:291px;font-size:11.2px">77 °C  (171 °F)</div>
<svg style="left:222px;top:308px" width="16" height="16" viewBox="0 0 16 16"><defs><linearGradient id="scr2" x1="0" y1="0" x2="1" y2="0"><stop offset="0" stop-color="#0a1ea8"/><stop offset="0.45" stop-color="#1a3ad8"/><stop offset="0.55" stop-color="#8aa8f0"/><stop offset="1" stop-color="#c8d8fa"/></linearGradient></defs><rect x="0.5" y="5.5" width="3" height="10" fill="#d0d4d8" stroke="#8a9096" stroke-width="0.8"/><rect x="1" y="5" width="2" height="2" fill="#3cb83c"/><rect x="4.5" y="0.5" width="11" height="10" fill="#d8dde2" stroke="#9aa2aa" stroke-width="1"/><rect x="6" y="2" width="8" height="7" fill="url(#scr2)"/><rect x="9" y="11" width="2" height="1.5" fill="#9a9a9a"/><rect x="6" y="13" width="8" height="2" fill="#b8bcc0"/></svg>
<div class="t" style="left:240px;top:310px;">Aux</div>
<div class="t" style="left:408px;top:310px;font-size:11.2px">44 °C  (111 °F)</div>
<svg style="left:222px;top:327px" width="16" height="16" viewBox="0 0 16 16"><rect x="0.5" y="0.5" width="12" height="10" fill="#d8dde2" stroke="#9aa2aa" stroke-width="1"/><rect x="2" y="2" width="9" height="7" fill="url(#scr2)"/><rect x="5" y="11" width="3" height="1" fill="#9a9a9a"/><rect x="2" y="12" width="8" height="2" fill="#b8bcc0"/><rect x="8.5" y="10.5" width="7" height="5" fill="#2e8a3e" stroke="#1a5a24" stroke-width="0.8"/><rect x="10" y="12" width="4" height="2" fill="#a8d8a0"/><rect x="9" y="15" width="6" height="1" fill="#d8b040"/></svg>
<div class="t" style="left:240px;top:329px;">Grafický procesor (GPU)</div>
<div class="t" style="left:408px;top:329px;font-size:11.2px">37 °C  (99 °F)</div>
<svg style="left:222px;top:346px" width="16" height="16" viewBox="0 0 16 16"><defs><linearGradient id="hg" x1="0" y1="0" x2="0" y2="1"><stop offset="0" stop-color="#f4f6f8"/><stop offset="0.55" stop-color="#e2e6ea"/><stop offset="0.56" stop-color="#b8bec4"/><stop offset="1" stop-color="#d0d4d8"/></linearGradient></defs><path d="M0.5 8 Q0.5 4.5 4 4.5 H12 Q15.5 4.5 15.5 8 V12.5 Q15.5 14.5 13.5 14.5 H2.5 Q0.5 14.5 0.5 12.5Z" fill="url(#hg)" stroke="#70767c" stroke-width="1"/><rect x="12" y="9.5" width="2" height="3" fill="#38b838"/></svg>
<div class="t" style="left:240px;top:348px;font-size:11px">WDC WD10EARX-00N0YB0</div>
<div class="t" style="left:408px;top:348px;font-size:11.2px">35 °C  (95 °F)</div>
<svg style="left:206px;top:384px" width="16" height="16" viewBox="0 0 16 16"><circle cx="8" cy="8" r="7.3" fill="#4a4a4a" stroke="#202020" stroke-width="1"/><circle cx="8" cy="8" r="5" fill="#d8d8d8"/><circle cx="8" cy="8" r="3" fill="#303030"/></svg>
<div class="t" style="left:224px;top:386px;">Ventilátory</div>
<svg style="left:222px;top:403px" width="16" height="16" viewBox="0 0 16 16"><defs><linearGradient id="cg" x1="0" y1="0" x2="1" y2="1"><stop offset="0" stop-color="#f4f4f4"/><stop offset="1" stop-color="#8c8c8c"/></linearGradient></defs><path d="M0.5 0.5 H12 L14 2.5 V14 H0.5Z" fill="#3c3c3c" stroke="#262626" stroke-width="1"/><rect x="3" y="3" width="9" height="9" fill="url(#cg)"/><path d="M15.5 3 V14" stroke="#c8a040" stroke-width="1" stroke-dasharray="1,1"/><path d="M2 15.5 H14" stroke="#c8a040" stroke-width="1" stroke-dasharray="1,1"/><rect x="12" y="12" width="2.5" height="2.5" fill="#e0b060"/></svg>
<div class="t" style="left:240px;top:405px;">CPU</div>
<div class="t" style="left:408px;top:405px;font-size:11.2px">2848 RPM</div>
<svg style="left:222px;top:422px" width="16" height="16" viewBox="0 0 16 16"><rect x="1.5" y="1.5" width="13" height="14" fill="#f2f4f6" stroke="#bcc2c8" stroke-width="1"/><rect x="4" y="4" width="5" height="3" fill="#d5dade"/><rect x="10" y="4" width="2" height="10" fill="#d5dade"/></svg>
<div class="t" style="left:240px;top:424px;">Skříň</div>
<div class="t" style="left:408px;top:424px;font-size:11.2px">705 RPM</div>
<svg style="left:222px;top:441px" width="16" height="16" viewBox="0 0 16 16"><rect x="0.5" y="0.5" width="12" height="10" fill="#d8dde2" stroke="#9aa2aa" stroke-width="1"/><rect x="2" y="2" width="9" height="7" fill="url(#scr2)"/><rect x="5" y="11" width="3" height="1" fill="#9a9a9a"/><rect x="2" y="12" width="8" height="2" fill="#b8bcc0"/><rect x="8.5" y="10.5" width="7" height="5" fill="#2e8a3e" stroke="#1a5a24" stroke-width="0.8"/><rect x="10" y="12" width="4" height="2" fill="#a8d8a0"/><rect x="9" y="15" width="6" height="1" fill="#d8b040"/></svg>
<div class="t" style="left:240px;top:443px;">Grafický procesor (GPU)</div>
<div class="t" style="left:408px;top:443px;font-size:11.2px">1020 RPM</div>
<div class="" style="left:222px;top:460px;width:552px;height:18px;border:1px dotted #404040"></div>
<svg style="left:206px;top:479px" width="16" height="16" viewBox="0 0 16 16"><path d="M8 1 L15.3 14.5 Q15.5 15.5 14.5 15.5 H1.5 Q0.5 15.5 0.7 14.5Z" fill="#fcd12a" stroke="#a8840a" stroke-width="1"/><path d="M8.8 4 L5.5 9.2 H8 L6.2 13.5 L10.8 8 H8.3 L10 4Z" fill="#e0301a" stroke="#a01a0a" stroke-width="0.4"/></svg>
<div class="t" style="left:224px;top:481px;">Napájecí napětí</div>
<svg style="left:222px;top:498px" width="16" height="16" viewBox="0 0 16 16"><defs><linearGradient id="cg" x1="0" y1="0" x2="1" y2="1"><stop offset="0" stop-color="#f4f4f4"/><stop offset="1" stop-color="#8c8c8c"/></linearGradient></defs><path d="M0.5 0.5 H12 L14 2.5 V14 H0.5Z" fill="#3c3c3c" stroke="#262626" stroke-width="1"/><rect x="3" y="3" width="9" height="9" fill="url(#cg)"/><path d="M15.5 3 V14" stroke="#c8a040" stroke-width="1" stroke-dasharray="1,1"/><path d="M2 15.5 H14" stroke="#c8a040" stroke-width="1" stroke-dasharray="1,1"/><rect x="12" y="12" width="2.5" height="2.5" fill="#e0b060"/></svg>
<div class="t" style="left:240px;top:500px;">Jádro CPU</div>
<div class="t" style="left:408px;top:500px;font-size:11.2px">1.248 V</div>
<svg style="left:222px;top:517px" width="16" height="16" viewBox="0 0 16 16"><defs><linearGradient id="cg" x1="0" y1="0" x2="1" y2="1"><stop offset="0" stop-color="#f4f4f4"/><stop offset="1" stop-color="#8c8c8c"/></linearGradient></defs><path d="M0.5 0.5 H12 L14 2.5 V14 H0.5Z" fill="#3c3c3c" stroke="#262626" stroke-width="1"/><rect x="3" y="3" width="9" height="9" fill="url(#cg)"/><path d="M15.5 3 V14" stroke="#c8a040" stroke-width="1" stroke-dasharray="1,1"/><path d="M2 15.5 H14" stroke="#c8a040" stroke-width="1" stroke-dasharray="1,1"/><rect x="12" y="12" width="2.5" height="2.5" fill="#e0b060"/></svg>
<div class="t" style="left:240px;top:519px;">+2.5 V</div>
<div class="t" style="left:408px;top:519px;font-size:11.2px">1.520 V</div>
<svg style="left:222px;top:536px" width="16" height="16" viewBox="0 0 16 16"><path d="M8 1 L15.3 14.5 Q15.5 15.5 14.5 15.5 H1.5 Q0.5 15.5 0.7 14.5Z" fill="#fcd12a" stroke="#a8840a" stroke-width="1"/><path d="M8.8 4 L5.5 9.2 H8 L6.2 13.5 L10.8 8 H8.3 L10 4Z" fill="#e0301a" stroke="#a01a0a" stroke-width="0.4"/></svg>
<div class="t" style="left:240px;top:538px;">+3.3 V</div>
<div class="t" style="left:408px;top:538px;font-size:11.2px">3.376 V</div>
<svg style="left:222px;top:555px" width="16" height="16" viewBox="0 0 16 16"><path d="M8 1 L15.3 14.5 Q15.5 15.5 14.5 15.5 H1.5 Q0.5 15.5 0.7 14.5Z" fill="#fcd12a" stroke="#a8840a" stroke-width="1"/><path d="M8.8 4 L5.5 9.2 H8 L6.2 13.5 L10.8 8 H8.3 L10 4Z" fill="#e0301a" stroke="#a01a0a" stroke-width="0.4"/></svg>
<div class="t" style="left:240px;top:557px;">+5 V</div>
<div class="t" style="left:408px;top:557px;font-size:11.2px">4.973 V</div>
<svg style="left:222px;top:574px" width="16" height="16" viewBox="0 0 16 16"><path d="M8 1 L15.3 14.5 Q15.5 15.5 14.5 15.5 H1.5 Q0.5 15.5 0.7 14.5Z" fill="#fcd12a" stroke="#a8840a" stroke-width="1"/><path d="M8.8 4 L5.5 9.2 H8 L6.2 13.5 L10.8 8 H8.3 L10 4Z" fill="#e0301a" stroke="#a01a0a" stroke-width="0.4"/></svg>
<div class="t" style="left:240px;top:576px;">+12 V</div>
<div class="t" style="left:408px;top:576px;font-size:11.2px">7.424 V</div>
<svg style="left:222px;top:593px" width="16" height="16" viewBox="0 0 16 16"><path d="M8 1 L15.3 14.5 Q15.5 15.5 14.5 15.5 H1.5 Q0.5 15.5 0.7 14.5Z" fill="#fcd12a" stroke="#a8840a" stroke-width="1"/><path d="M8.8 4 L5.5 9.2 H8 L6.2 13.5 L10.8 8 H8.3 L10 4Z" fill="#e0301a" stroke="#a01a0a" stroke-width="0.4"/></svg>
<div class="t" style="left:240px;top:595px;">+5 V Standby</div>
<div class="t" style="left:408px;top:595px;font-size:11.2px">3.629 V</div>
<svg style="left:222px;top:612px" width="16" height="16" viewBox="0 0 16 16"><path d="M9 1 C5 1 5 3 5 6 V12 C5 15 12 15 12 12 V6 C12 3 12 1 9 1Z" fill="#48c048" stroke="#222" stroke-width="0.8"/><path d="M5.5 2.5 C7 1.5 11 1.5 11.5 2.5 V5 H5.5Z" fill="#f4f4f4"/><path d="M1 8 H4 M1 10.5 H4" stroke="#c8a030" stroke-width="1.4"/><path d="M3.5 7 H7 L9.5 9.2 L7 11.5 H3.5Z" fill="#707478" stroke="#222" stroke-width="0.6"/><path d="M2 0.5 Q2 4 5 5" fill="none" stroke="#222" stroke-width="0.8"/></svg>
<div class="t" style="left:240px;top:614px;">VBAT Baterie</div>
<div class="t" style="left:408px;top:614px;font-size:11.2px">3.168 V</div>
<svg style="left:222px;top:631px" width="16" height="16" viewBox="0 0 16 16"><rect x="0.5" y="0.5" width="12" height="10" fill="#d8dde2" stroke="#9aa2aa" stroke-width="1"/><rect x="2" y="2" width="9" height="7" fill="url(#scr2)"/><rect x="5" y="11" width="3" height="1" fill="#9a9a9a"/><rect x="2" y="12" width="8" height="2" fill="#b8bcc0"/><rect x="8.5" y="10.5" width="7" height="5" fill="#2e8a3e" stroke="#1a5a24" stroke-width="0.8"/><rect x="10" y="12" width="4" height="2" fill="#a8d8a0"/><rect x="9" y="15" width="6" height="1" fill="#d8b040"/></svg>
<div class="t" style="left:240px;top:633px;">Jádro GPU</div>
<div class="t" style="left:408px;top:633px;font-size:11.2px">0.875 V</div>
<div class="" style="left:965px;top:0px;width:944px;height:1001px;background:#f0f0f0"></div>
<div class="" style="left:965px;top:0px;width:7px;height:1001px;background:linear-gradient(90deg,#d6d8da,#f0f0f0)"></div>
<div class="" style="left:1909px;top:0px;width:1px;height:1002px;background:#5a5f63"></div>
<div class="" style="left:965px;top:1001px;width:945px;height:1px;background:#5a5f63"></div>
<div class="" style="left:965px;top:1002px;width:950px;height:1px;background:#c8e4ee"></div>
<div class="" style="left:1910px;top:0px;width:5px;height:1003px;background:linear-gradient(90deg,#e6f8fc,#f0fdff)"></div>
<div class="" style="left:972px;top:8px;width:928px;height:956px;background:#fff;border:1px solid #8c8c8c"></div>
<svg style="left:984px;top:22px" width="16" height="16" viewBox="0 0 16 16"><defs><linearGradient id="cg" x1="0" y1="0" x2="1" y2="1"><stop offset="0" stop-color="#f4f4f4"/><stop offset="1" stop-color="#8c8c8c"/></linearGradient></defs><path d="M0.5 0.5 H12 L14 2.5 V14 H0.5Z" fill="#3c3c3c" stroke="#262626" stroke-width="1"/><rect x="3" y="3" width="9" height="9" fill="url(#cg)"/><path d="M15.5 3 V14" stroke="#c8a040" stroke-width="1" stroke-dasharray="1,1"/><path d="M2 15.5 H14" stroke="#c8a040" stroke-width="1" stroke-dasharray="1,1"/><rect x="12" y="12" width="2.5" height="2.5" fill="#e0b060"/></svg>
<div class="" style="left:1008px;top:24px;width:13px;height:13px;border:1px solid #8f8f8f;background:linear-gradient(135deg,#e0e2e6,#fbfbfb)"></div>
<svg style="left:1010px;top:26px" width="10" height="10" viewBox="0 0 10 10"><path d="M1.5 5 L4 8.5 L8.5 1" fill="none" stroke="#3a4aa0" stroke-width="1.8"/></svg>
<div class="t" style="left:1024px;top:24px;letter-spacing:-0.2px">Stress CPU</div>
<svg style="left:984px;top:46px" width="16" height="16" viewBox="0 0 16 16"><rect x="0.5" y="0.5" width="15" height="15" fill="#3d3d3d" stroke="#222" stroke-width="1"/><rect x="3" y="3" width="9" height="9" fill="#e6e6e6"/><text x="7.5" y="11" font-family="Liberation Sans" font-weight="bold" font-size="8" fill="#444" text-anchor="middle">%</text><rect x="13" y="13" width="2" height="2" fill="#d8a850"/></svg>
<div class="" style="left:1008px;top:48px;width:13px;height:13px;border:1px solid #8f8f8f;background:linear-gradient(135deg,#e0e2e6,#fbfbfb)"></div>
<svg style="left:1010px;top:50px" width="10" height="10" viewBox="0 0 10 10"><path d="M1.5 5 L4 8.5 L8.5 1" fill="none" stroke="#3a4aa0" stroke-width="1.8"/></svg>
<div class="t" style="left:1024px;top:48px;letter-spacing:-0.2px">Stress FPU</div>
<svg style="left:984px;top:70px" width="16" height="16" viewBox="0 0 16 16"><rect x="2.5" y="0.5" width="11" height="15" fill="#222" stroke="#111" stroke-width="1"/><path d="M1 2 H3 M1 4 H3 M1 6 H3 M1 8 H3 M1 10 H3 M1 12 H3 M1 14 H3 M13 2 H15 M13 4 H15 M13 6 H15 M13 8 H15 M13 10 H15 M13 12 H15 M13 14 H15" stroke="#888" stroke-width="1"/><rect x="5" y="3" width="6" height="9" fill="#555"/></svg>
<div class="" style="left:1008px;top:72px;width:13px;height:13px;border:1px solid #8f8f8f;background:linear-gradient(135deg,#e0e2e6,#fbfbfb)"></div>
<svg style="left:1010px;top:74px" width="10" height="10" viewBox="0 0 10 10"><path d="M1.5 5 L4 8.5 L8.5 1" fill="none" stroke="#3a4aa0" stroke-width="1.8"/></svg>
<div class="t" style="left:1024px;top:72px;letter-spacing:-0.2px">Stress cache</div>
<svg style="left:984px;top:94px" width="16" height="16" viewBox="0 0 16 16"><rect x="0.5" y="3.5" width="15" height="7" fill="#2e8a3e" stroke="#1a5a24" stroke-width="1"/><path d="M3 5 V8 M5 5 V8 M7 5 V8 M9 5 V8 M11 5 V8 M13 5 V8" stroke="#222" stroke-width="1.2"/><rect x="1" y="9" width="14" height="2" fill="#d8b040"/></svg>
<div class="" style="left:1008px;top:96px;width:13px;height:13px;border:1px solid #8f8f8f;background:linear-gradient(135deg,#e0e2e6,#fbfbfb)"></div>
<svg style="left:1010px;top:98px" width="10" height="10" viewBox="0 0 10 10"><path d="M1.5 5 L4 8.5 L8.5 1" fill="none" stroke="#3a4aa0" stroke-width="1.8"/></svg>
<div class="t" style="left:1024px;top:96px;letter-spacing:-0.2px">Stress system memory</div>
<svg style="left:984px;top:118px" width="16" height="16" viewBox="0 0 16 16"><defs><linearGradient id="hg" x1="0" y1="0" x2="0" y2="1"><stop offset="0" stop-color="#f4f6f8"/><stop offset="0.55" stop-color="#e2e6ea"/><stop offset="0.56" stop-color="#b8bec4"/><stop offset="1" stop-color="#d0d4d8"/></linearGradient></defs><path d="M0.5 8 Q0.5 4.5 4 4.5 H12 Q15.5 4.5 15.5 8 V12.5 Q15.5 14.5 13.5 14.5 H2.5 Q0.5 14.5 0.5 12.5Z" fill="url(#hg)" stroke="#70767c" stroke-width="1"/><rect x="12" y="9.5" width="2" height="3" fill="#38b838"/></svg>
<div class="" style="left:1008px;top:120px;width:13px;height:13px;border:1px solid #8f8f8f;background:linear-gradient(135deg,#e0e2e6,#fbfbfb)"></div>
<div class="t" style="left:1024px;top:120px;letter-spacing:-0.2px">Stress local disks</div>
<div class="" style="left:1148px;top:22px;width:438px;height:120px;background:#fff;border:1px solid #84878c"></div>
<div class="" style="left:1149px;top:23px;width:436px;height:24px;background:linear-gradient(#ffffff 0,#ffffff 9px,#f3f4f6 10px,#f1f2f4 23px);border-bottom:1px solid #d5d5d5"></div>
<div class="" style="left:1299px;top:23px;width:1px;height:23px;background:#e3e4e6"></div>
<div class="" style="left:1566px;top:23px;width:1px;height:23px;background:#e3e4e6"></div>
<div class="t" style="left:1156px;top:29px;">Date &amp; Time</div>
<div class="t" style="left:1306px;top:29px;">Status</div>
<div class="" style="left:1153px;top:47px;width:413px;height:19px;background:#eeeeee"></div>
<div class="t" style="left:1156px;top:51px;font-size:11px">30.3.2012 17:21:02</div>
<div class="t" style="left:1306px;top:51px;">Stability Test: Started</div>
<div class="" style="left:1149px;top:66px;width:436px;height:1px;background:#f0f0f0"></div>
<div class="" style="left:1149px;top:85px;width:436px;height:1px;background:#f0f0f0"></div>
<div class="" style="left:1149px;top:104px;width:436px;height:1px;background:#f0f0f0"></div>
<div class="" style="left:1149px;top:123px;width:436px;height:1px;background:#f0f0f0"></div>
<div class="" style="left:1299px;top:47px;width:1px;height:94px;background:#efefef"></div>
<div class="" style="left:1566px;top:47px;width:1px;height:94px;background:#efefef"></div>
<div class="" style="left:988px;top:170px;width:897px;height:373px;background:#fff;border:1px solid #8c8e92;border-bottom:none"></div>
<div class="" style="left:1076px;top:150px;width:81px;height:21px;background:linear-gradient(#f2f2f2,#dcdcdc);border:1px solid #8c8e92"></div>
<div class="t" style="left:1082px;top:154px;">Cooling Fans</div>
<div class="" style="left:1156px;top:150px;width:58px;height:21px;background:linear-gradient(#f2f2f2,#dcdcdc);border:1px solid #8c8e92"></div>
<div class="t" style="left:1162px;top:154px;">Voltages</div>
<div class="" style="left:1213px;top:150px;width:57px;height:21px;background:linear-gradient(#f2f2f2,#dcdcdc);border:1px solid #8c8e92"></div>
<div class="t" style="left:1219px;top:154px;">Statistics</div>
<div class="" style="left:988px;top:148px;width:89px;height:23px;background:#fff;border:1px solid #8c8e92;border-bottom:none"></div>
<div class="t" style="left:996px;top:151px;">Temperatures</div>
<div class="" style="left:993px;top:190px;width:17px;height:340px;background:#e6e8ea;border-left:1px solid #a8a8a8"></div>
<div class="" style="left:990px;top:180px;width:23px;height:11px;border:1px solid #8a8a8a;border-radius:3px;background:linear-gradient(#f6f6f6,#d8d8d8)"></div>
<svg style="left:1014px;top:172px" width="872" height="367" viewBox="0 0 872 367"><rect x="0" y="0" width="872" height="367" fill="#000"/><path d="M50.5 30 V337.5M60.5 30 V337.5M70.5 30 V337.5M80.5 30 V337.5M90.5 30 V337.5M100.5 30 V337.5M110.5 30 V337.5M120.5 30 V337.5M130.5 30 V337.5M140.5 30 V337.5M150.5 30 V337.5M160.5 30 V337.5M170.5 30 V337.5M180.5 30 V337.5M190.5 30 V337.5M200.5 30 V337.5M210.5 30 V337.5M220.5 30 V337.5M230.5 30 V337.5M240.5 30 V337.5M250.5 30 V337.5M260.5 30 V337.5M270.5 30 V337.5M280.5 30 V337.5M290.5 30 V337.5M300.5 30 V337.5M310.5 30 V337.5M320.5 30 V337.5M330.5 30 V337.5M340.5 30 V337.5M350.5 30 V337.5M360.5 30 V337.5M370.5 30 V337.5M380.5 30 V337.5M390.5 30 V337.5M400.5 30 V337.5M410.5 30 V337.5M420.5 30 V337.5M430.5 30 V337.5M440.5 30 V337.5M450.5 30 V337.5M460.5 30 V337.5M470.5 30 V337.5M480.5 30 V337.5M490.5 30 V337.5M500.5 30 V337.5M510.5 30 V337.5M520.5 30 V337.5M530.5 30 V337.5M540.5 30 V337.5M550.5 30 V337.5M560.5 30 V337.5M570.5 30 V337.5M580.5 30 V337.5M590.5 30 V337.5M600.5 30 V337.5M610.5 30 V337.5M620.5 30 V337.5M630.5 30 V337.5M640.5 30 V337.5M650.5 30 V337.5M660.5 30 V337.5M670.5 30 V337.5M680.5 30 V337.5M690.5 30 V337.5M700.5 30 V337.5M710.5 30 V337.5M720.5 30 V337.5M730.5 30 V337.5M740.5 30 V337.5M750.5 30 V337.5M760.5 30 V337.5M770.5 30 V337.5M780.5 30 V337.5M790.5 30 V337.5M800.5 30 V337.5M810.5 30 V337.5M820.5 30 V337.5M50 37.5 H822M50 67.5 H822M50 97.5 H822M50 127.5 H822M50 157.5 H822M50 187.5 H822M50 217.5 H822M50 247.5 H822M50 277.5 H822M50 307.5 H822M50 337.5 H822" stroke="#2b6c2b" stroke-width="1" fill="none" shape-rendering="crispEdges"/><path d="M501.5 30 V337" stroke="#ffffff" stroke-width="1" stroke-dasharray="3,2" shape-rendering="crispEdges"/><polyline points="489.5,215.5 501.5,215.5 503.5,214.5 505.5,212.5 509.5,209.5 513.5,208.5 516.5,205.5 520.5,202.5 524.5,200.5 530.5,196.5 536.5,195.5 540.5,193.5 546.5,191.5 553.5,187.5 558.5,185.5 565.5,184.0 572.5,182.0 598.5,181.5 601.5,179.5 681.5,179.5 683.5,175.5 821.5,175.5" fill="none" stroke="#d8e0ff" stroke-width="1" stroke-linejoin="round"/><polyline points="489.5,205.5 501.5,205.5 502.5,188.5 503.5,176.5 507.5,175.5 512.5,169.5 516.5,162.5 520.5,156.5 523.5,154.0 528.5,153.5 534.5,145.5 540.5,144.5 543.5,141.5 545.5,144.5 548.5,141.5 555.5,139.0 578.5,139.0 580.5,136.5 582.5,138.5 584.5,136.5 586.5,138.5 588.5,136.5 595.5,136.0 606.5,136.0 608.5,133.5 610.5,136.5 613.5,133.5 615.5,136.5 626.5,136.5 628.5,133.5 630.5,136.5 701.5,136.5 703.5,133.5 706.5,133.5 708.5,136.5 786.5,136.5 788.5,133.5 791.5,133.5 793.5,136.5 796.5,133.5 799.5,136.5 808.5,136.5 811.5,133.5 814.5,136.5 821.5,136.5" fill="none" stroke="#e8e84a" stroke-width="1" stroke-linejoin="round"/><polyline points="488.5,203.5 501.5,203.5 502.5,158.5 502.5,147.1 506.5,150.7 510.5,131.1 514.5,141.8 518.5,126.3 520.5,137.3 523.5,116.6 528.5,131.4 532.5,118.9 536.5,128.2 540.5,113.0 544.5,132.1 548.5,105.5 550.5,129.5 553.5,109.6 557.5,127.3 561.5,110.8 565.5,127.6 568.5,106.9 573.5,128.6 578.5,104.2 582.5,119.4 584.5,108.1 587.5,121.6 591.5,103.8 593.5,123.3 595.5,104.8 598.5,125.0 600.5,109.1 602.5,126.6 604.5,105.4 609.5,124.8 611.5,106.2 614.5,121.0 617.5,103.9 620.5,125.3 624.5,108.0 626.5,127.2 631.5,101.6 633.5,124.0 637.5,102.3 641.5,126.7 645.5,102.4 650.5,121.0 654.5,106.8 656.5,124.6 659.5,100.5 663.5,125.5 665.5,102.6 669.5,118.7 673.5,106.8 675.5,128.1 678.5,102.6 681.5,128.4 685.5,103.7 688.5,124.7 690.5,101.4 694.5,122.3 696.5,106.4 699.5,122.4 702.5,109.9 706.5,120.3 709.5,109.0 712.5,122.4 715.5,109.4 719.5,126.1 722.5,102.1 727.5,119.3 730.5,107.2 734.5,119.9 738.5,101.3 740.5,127.5 742.5,105.5 745.5,126.2 750.5,104.3 754.5,120.4 758.5,105.3 762.5,126.8 767.5,110.1 770.5,126.3 774.5,106.9 778.5,122.5 781.5,102.6 784.5,121.2 786.5,103.1 790.5,126.1 792.5,102.2 795.5,123.3 798.5,101.4 801.5,119.8 804.5,106.9 809.5,123.4 812.5,106.3 814.5,123.8 817.5,107.4 821.5,126.5" fill="none" stroke="#e8e8e8" stroke-width="1" stroke-linejoin="round"/><polyline points="488.5,205.5 501.5,205.5 502.5,158.5 502.5,154.2 504.5,140.5 507.5,150.3 511.5,131.7 516.5,143.7 520.5,119.6 524.5,136.8 526.5,116.0 531.5,133.5 533.5,116.0 538.5,132.0 540.5,110.7 542.5,129.7 547.5,108.6 550.5,124.6 553.5,111.3 556.5,123.8 559.5,111.4 562.5,127.2 566.5,106.0 570.5,126.5 574.5,110.4 577.5,130.3 580.5,108.7 585.5,123.7 588.5,108.9 590.5,130.8 592.5,108.7 596.5,128.9 600.5,106.2 603.5,122.6 607.5,105.8 611.5,126.1 614.5,104.2 618.5,123.6 623.5,110.7 627.5,129.1 631.5,104.0 636.5,125.5 640.5,104.2 642.5,131.0 646.5,106.5 649.5,123.3 654.5,102.7 657.5,123.3 659.5,108.0 663.5,123.9 666.5,102.7 670.5,126.5 672.5,103.3 676.5,125.9 680.5,112.2 683.5,130.6 687.5,107.9 690.5,124.5 694.5,110.8 697.5,130.5 700.5,111.6 704.5,123.8 709.5,111.6 712.5,122.4 717.5,110.7 719.5,124.5 724.5,110.1 728.5,128.5 732.5,105.5 736.5,125.3 738.5,110.9 740.5,131.2 743.5,105.9 747.5,124.1 751.5,105.0 756.5,130.7 760.5,109.5 762.5,129.1 766.5,112.2 770.5,121.5 773.5,102.5 777.5,131.3 780.5,110.1 784.5,129.4 789.5,102.8 794.5,126.9 798.5,112.2 802.5,124.4 806.5,108.6 810.5,124.2 813.5,107.8 816.5,128.8 818.5,104.8 821.5,118.5" fill="none" stroke="#e060e0" stroke-width="1" stroke-linejoin="round"/><polyline points="488.5,202.5 501.5,202.5 502.5,158.5 502.5,158.4 506.5,139.9 511.5,141.4 515.5,122.6 518.5,137.7 520.5,124.8 524.5,132.3 527.5,119.4 532.5,130.0 535.5,115.8 537.5,131.3 539.5,110.6 542.5,124.9 546.5,111.2 550.5,126.0 555.5,107.2 557.5,120.9 561.5,102.9 565.5,127.3 567.5,106.6 570.5,126.9 574.5,101.9 577.5,123.9 580.5,107.4 582.5,120.0 585.5,106.4 588.5,120.1 592.5,105.3 595.5,120.7 598.5,101.5 601.5,122.0 604.5,101.4 609.5,126.2 613.5,99.7 618.5,126.6 623.5,100.9 627.5,120.2 630.5,102.0 632.5,116.8 634.5,104.2 639.5,121.6 642.5,106.6 645.5,121.9 649.5,100.3 652.5,125.2 654.5,105.3 658.5,120.8 662.5,107.5 664.5,123.0 666.5,104.0 668.5,124.3 671.5,102.4 674.5,125.8 676.5,108.0 678.5,124.4 681.5,105.4 685.5,119.6 688.5,105.9 691.5,117.5 693.5,106.8 697.5,119.9 700.5,105.6 703.5,120.2 706.5,104.2 708.5,123.9 712.5,100.7 716.5,123.0 719.5,107.0 722.5,117.4 725.5,103.3 727.5,117.5 731.5,104.6 734.5,120.1 738.5,105.5 741.5,120.1 743.5,103.3 745.5,119.3 748.5,107.7 752.5,120.9 756.5,105.7 759.5,125.1 762.5,105.1 765.5,124.9 768.5,107.8 770.5,124.8 774.5,106.4 777.5,121.8 779.5,98.7 781.5,123.0 783.5,107.8 786.5,123.3 791.5,103.2 795.5,125.8 799.5,99.2 802.5,124.3 805.5,104.2 809.5,125.9 813.5,106.4 816.5,118.3 821.5,117.5" fill="none" stroke="#50e0f0" stroke-width="1" stroke-linejoin="round"/><polyline points="488.5,199.5 501.5,199.5 502.5,158.5 502.5,145.2 505.5,148.7 509.5,133.5 514.5,141.2 517.5,121.4 522.5,130.8 524.5,118.3 529.5,124.5 531.5,110.8 534.5,122.4 539.5,106.1 542.5,122.9 546.5,106.5 548.5,120.4 550.5,104.1 553.5,119.0 556.5,99.5 559.5,119.3 562.5,103.4 564.5,124.8 567.5,104.2 570.5,125.1 573.5,99.1 575.5,119.3 578.5,101.0 580.5,122.2 583.5,97.4 585.5,120.9 590.5,102.7 594.5,122.5 596.5,97.3 600.5,115.2 604.5,100.1 609.5,121.8 611.5,104.6 616.5,119.9 619.5,97.0 621.5,117.3 626.5,104.3 628.5,114.6 633.5,96.9 637.5,117.9 642.5,96.4 646.5,120.3 648.5,105.3 651.5,122.3 654.5,103.0 659.5,117.2 663.5,96.4 668.5,121.7 671.5,104.9 674.5,121.7 679.5,98.8 683.5,120.6 686.5,103.1 691.5,123.7 695.5,97.2 697.5,122.2 701.5,102.3 703.5,114.5 707.5,101.3 710.5,119.5 712.5,97.8 717.5,117.2 721.5,101.6 726.5,122.5 730.5,99.5 733.5,115.4 736.5,95.8 740.5,117.3 743.5,102.0 747.5,119.2 750.5,99.7 752.5,124.1 757.5,101.5 760.5,122.3 764.5,104.9 767.5,121.6 770.5,104.2 774.5,122.2 776.5,104.3 779.5,118.2 783.5,98.6 787.5,117.5 790.5,96.5 794.5,118.5 797.5,100.4 801.5,121.5 804.5,100.5 808.5,116.1 810.5,101.7 815.5,116.2 815.5,96.5 818.5,91.5 822.5,89.5" fill="none" stroke="#50e050" stroke-width="1" stroke-linejoin="round"/><polyline points="839.5,117.5 845.5,117.5 845.5,119.5" fill="none" stroke="#e060e0" stroke-width="1" stroke-linejoin="round"/><polyline points="849.5,116.5 846.5,118.5 849.5,120.5" fill="none" stroke="#e060e0" stroke-width="1" stroke-linejoin="round"/></svg>
<div class="" style="left:1073px;top:181px;width:13px;height:13px;background:#f4f4f4;border:1px solid #7a8aa0"></div>
<svg style="left:1075px;top:183px" width="10" height="10" viewBox="0 0 10 10"><path d="M1.5 5 L4 8 L8.5 2" fill="none" stroke="#1f9a1f" stroke-width="2"/></svg>
<div class="t" style="left:1089px;top:181px;color:#e8e84a;font-size:11px;font-weight:bold">Motherboard</div>
<div class="" style="left:1168px;top:181px;width:13px;height:13px;background:#f4f4f4;border:1px solid #7a8aa0"></div>
<svg style="left:1170px;top:183px" width="10" height="10" viewBox="0 0 10 10"><path d="M1.5 5 L4 8 L8.5 2" fill="none" stroke="#1f9a1f" stroke-width="2"/></svg>
<div class="t" style="left:1185px;top:181px;color:#c8d4f0;font-size:11px">CPU</div>
<div class="" style="left:1215px;top:181px;width:13px;height:13px;background:#f4f4f4;border:1px solid #7a8aa0"></div>
<svg style="left:1217px;top:183px" width="10" height="10" viewBox="0 0 10 10"><path d="M1.5 5 L4 8 L8.5 2" fill="none" stroke="#1f9a1f" stroke-width="2"/></svg>
<div class="t" style="left:1231px;top:181px;color:#50e050;font-size:11px">CPU #1 / Core #1</div>
<div class="" style="left:1328px;top:181px;width:13px;height:13px;background:#f4f4f4;border:1px solid #7a8aa0"></div>
<svg style="left:1330px;top:183px" width="10" height="10" viewBox="0 0 10 10"><path d="M1.5 5 L4 8 L8.5 2" fill="none" stroke="#1f9a1f" stroke-width="2"/></svg>
<div class="t" style="left:1344px;top:181px;color:#40d8e8;font-size:11px">CPU #1 / Core #2</div>
<div class="" style="left:1441px;top:181px;width:13px;height:13px;background:#f4f4f4;border:1px solid #7a8aa0"></div>
<svg style="left:1443px;top:183px" width="10" height="10" viewBox="0 0 10 10"><path d="M1.5 5 L4 8 L8.5 2" fill="none" stroke="#1f9a1f" stroke-width="2"/></svg>
<div class="t" style="left:1457px;top:181px;color:#e050e0;font-size:11px">CPU #1 / Core #3</div>
<div class="" style="left:1554px;top:181px;width:13px;height:13px;background:#f4f4f4;border:1px solid #7a8aa0"></div>
<svg style="left:1556px;top:183px" width="10" height="10" viewBox="0 0 10 10"><path d="M1.5 5 L4 8 L8.5 2" fill="none" stroke="#1f9a1f" stroke-width="2"/></svg>
<div class="t" style="left:1570px;top:181px;color:#e8e8e8;font-size:11px">CPU #1 / Core #4</div>
<div class="" style="left:1667px;top:181px;width:13px;height:13px;background:#f4f4f4;border:1px solid #7a8aa0"></div>
<div class="t" style="left:1682px;top:181px;color:#e8c890;font-size:11px;font-size:10.5px">WDC WD10EARX-00N0YB0</div>
<div class="t" style="left:1029px;top:196px;color:#fff;font-size:11px;letter-spacing:-0.6px">100 °C</div>
<div class="t" style="left:1040px;top:503px;color:#fff;font-size:11px;letter-spacing:-0.6px">0 °C</div>
<div class="t" style="left:1472px;top:513px;color:#fff;font-size:11px">17:21:02</div>
<div class="t" style="left:1839px;top:255px;color:#50e050;font-size:11px">81</div>
<div class="t" style="left:1839px;top:282px;color:#40d8e8;font-size:11px">72</div>
<div class="t" style="left:1852px;top:291px;color:#e0e0e0;font-size:11px">69</div>
<div class="t" style="left:1839px;top:301px;color:#e8e84a;font-size:11px">66</div>
<div class="t" style="left:1839px;top:341px;color:#c8d4f4;font-size:11px">53</div>
<svg style="left:988px;top:543px" width="898" height="368" viewBox="0 0 898 368"><rect x="0" y="0" width="898" height="368" fill="#000"/><path d="M52.5 30 V338M62.5 30 V338M72.5 30 V338M82.5 30 V338M92.5 30 V338M102.5 30 V338M112.5 30 V338M122.5 30 V338M132.5 30 V338M142.5 30 V338M152.5 30 V338M162.5 30 V338M172.5 30 V338M182.5 30 V338M192.5 30 V338M202.5 30 V338M212.5 30 V338M222.5 30 V338M232.5 30 V338M242.5 30 V338M252.5 30 V338M262.5 30 V338M272.5 30 V338M282.5 30 V338M292.5 30 V338M302.5 30 V338M312.5 30 V338M322.5 30 V338M332.5 30 V338M342.5 30 V338M352.5 30 V338M362.5 30 V338M372.5 30 V338M382.5 30 V338M392.5 30 V338M402.5 30 V338M412.5 30 V338M422.5 30 V338M432.5 30 V338M442.5 30 V338M452.5 30 V338M462.5 30 V338M472.5 30 V338M482.5 30 V338M492.5 30 V338M502.5 30 V338M512.5 30 V338M522.5 30 V338M532.5 30 V338M542.5 30 V338M552.5 30 V338M562.5 30 V338M572.5 30 V338M582.5 30 V338M592.5 30 V338M602.5 30 V338M612.5 30 V338M622.5 30 V338M632.5 30 V338M642.5 30 V338M652.5 30 V338M662.5 30 V338M672.5 30 V338M682.5 30 V338M692.5 30 V338M702.5 30 V338M712.5 30 V338M722.5 30 V338M732.5 30 V338M742.5 30 V338M752.5 30 V338M762.5 30 V338M772.5 30 V338M782.5 30 V338M792.5 30 V338M802.5 30 V338M812.5 30 V338M822.5 30 V338M832.5 30 V338M842.5 30 V338M50 38.5 H848M50 68.5 H848M50 98.5 H848M50 128.5 H848M50 158.5 H848M50 188.5 H848M50 218.5 H848M50 248.5 H848M50 278.5 H848M50 308.5 H848M50 338.5 H848" stroke="#2b6c2b" stroke-width="1" fill="none" shape-rendering="crispEdges"/><path d="M52 30.5 H848" stroke="#e8e870" stroke-width="1" shape-rendering="crispEdges"/><path d="M52 338.5 H848" stroke="#40d040" stroke-width="1" shape-rendering="crispEdges"/></svg>
<div class="t" style="left:1006px;top:567px;color:#fff;font-size:11px">100%</div>
<div class="t" style="left:1018px;top:875px;color:#fff;font-size:11px">0%</div>
<div class="t" style="left:1839px;top:567px;color:#e8e870;font-size:11px">100%</div>
<div class="t" style="left:1839px;top:875px;color:#50e050;font-size:11px">0%</div>
<div class="t" style="left:1365px;top:552px;color:#e8e860;font-size:11px;letter-spacing:-0.4px">CPU Usage</div>
<div class="t" style="left:1427px;top:552px;color:#ffffff;font-size:11px">|</div>
<div class="t" style="left:1435px;top:552px;color:#50e050;font-size:11px">CPU Throttling</div>
<div class="t" style="left:988px;top:931px;">Remaining Battery:</div>
<div class="" style="left:1096px;top:925px;width:80px;height:24px;background:#000;color:#50e050;text-align:center;line-height:25px;font-size:11px">No battery</div>
<div class="t" style="left:1194px;top:931px;">Test Started:</div>
<div class="" style="left:1267px;top:925px;width:140px;height:24px;background:#000;color:#50e050;text-align:center;line-height:25px;font-size:11px">30.3.2012 17:21:02</div>
<div class="t" style="left:1425px;top:931px;">Elapsed Time:</div>
<div class="" style="left:1506px;top:925px;width:80px;height:24px;background:#000;color:#50e050;text-align:center;line-height:25px;font-size:11px">0:13:23</div>
<div class="btnd" style="left:973px;top:972px;width:73px;height:21px;">Start</div>
<div class="btn" style="left:1054px;top:972px;width:73px;height:21px;">Stop</div>
<div class="btn" style="left:1158px;top:972px;width:73px;height:21px;">Clear</div>
<div class="btn" style="left:1239px;top:972px;width:73px;height:21px;">Save</div>
<div class="btn" style="left:1343px;top:972px;width:73px;height:21px;">CPUID</div>
<div class="btn" style="left:1424px;top:972px;width:73px;height:21px;">Preferences</div>
<div class="btnd" style="left:1828px;top:972px;width:73px;height:21px;">Close</div>
<svg style="left:19px;top:26px" width="25" height="22" viewBox="0 0 25 22"><defs><linearGradient id="ab" x1="0" y1="0" x2="0" y2="1"><stop offset="0" stop-color="#b4d4ec"/><stop offset="0.5" stop-color="#86b2d8"/><stop offset="1" stop-color="#4f86ba"/></linearGradient><linearGradient id="ag" x1="0" y1="0" x2="1" y2="0"><stop offset="0" stop-color="#1e9a1e"/><stop offset="0.5" stop-color="#6ae86a"/><stop offset="1" stop-color="#28a828"/></linearGradient></defs><path d="M0.8 10.5 L9 2.2 Q11.3 0.2 13.5 2.4 Q14.8 4 13.5 5.5 L11 7.2 H21 Q23.5 7.2 23.5 10.5 Q23.5 13.8 21 13.8 H11 L13.5 15.5 Q14.8 17 13.5 18.6 Q11.3 20.8 9 18.8 Z" fill="url(#ab)" stroke="#5a82a8" stroke-width="0.9"/></svg>
<svg style="left:49px;top:26px" width="25" height="22" viewBox="0 0 25 22"><g transform="translate(25,0) scale(-1,1)"><path d="M0.8 10.5 L9 2.2 Q11.3 0.2 13.5 2.4 Q14.8 4 13.5 5.5 L11 7.2 H21 Q23.5 7.2 23.5 10.5 Q23.5 13.8 21 13.8 H11 L13.5 15.5 Q14.8 17 13.5 18.6 Q11.3 20.8 9 18.8 Z" fill="url(#ab)" stroke="#5a82a8" stroke-width="0.9"/></g></svg>
<svg style="left:87px;top:24px" width="14" height="24" viewBox="0 0 14 24"><path d="M6.5 0.5 L0.5 7.5 L4 7.5 Q4.5 16 11.5 23 Q9.5 15 9 7.5 L13 7 Z" fill="url(#ag)" stroke="#1a7a1a" stroke-width="0.7"/></svg>
<svg style="left:114px;top:24px" width="19" height="24" viewBox="0 0 19 24"><path d="M1 11 Q4 3 12 4 L11 1 L18 6 L12 11 L12 8 Q6 7 1 11Z" fill="url(#ag)" stroke="#2a9a2a" stroke-width="0.6"/><path d="M18 13 Q15 21 7 20 L8 23 L1 18 L7 13 L7 16 Q13 17 18 13Z" fill="url(#ag)" stroke="#2a9a2a" stroke-width="0.6"/></svg>
<svg style="left:142px;top:24px" width="25" height="24" viewBox="0 0 25 24"><ellipse cx="8" cy="18" rx="7" ry="5" fill="#8ab868"/><circle cx="8" cy="7" r="4.5" fill="#e8c89a"/><path d="M3 6 Q4 0.5 9 1 Q13 1.5 13 5 L11 4 Q7 3 3 6Z" fill="#d8c080"/><ellipse cx="15" cy="19.5" rx="8.5" ry="5" fill="#9cc4e4" stroke="#6a98c0" stroke-width="0.6"/><circle cx="15" cy="10" r="4.8" fill="#b8875a"/><path d="M10.5 9 Q10 4.5 15 4.5 Q20 4.5 19.5 9 Q17 7 10.5 9Z" fill="#3a3028"/><rect x="14" y="16" width="2" height="5" fill="#fff"/></svg>
<svg style="left:174px;top:26px" width="22" height="21" viewBox="0 0 22 21"><path d="M0.5 0.5 H20.5 L21 17 H1Z" fill="#dfe2e4" stroke="#9aa0a4" stroke-width="0.8"/><rect x="2" y="2" width="17.5" height="13.5" fill="#041804"/><path d="M2.5 9 L5 6 L6 10 L8 4 L9 12 L11 8 L12 11 L14 5 L15 13 L17 7 L19 9" fill="none" stroke="#30d030" stroke-width="1"/><path d="M2 12 H19 M2 5 H19" stroke="#0a5a0a" stroke-width="0.6"/><path d="M1 17 L21 18 L21.5 20.5 H1Z" fill="#c8ccd0"/></svg>
<svg style="left:221px;top:24px" width="24" height="23" viewBox="0 0 24 23"><path d="M0.5 0.5 H12.5 L17 5 V22 H0.5Z" fill="#fdfdfd" stroke="#a8adb3" stroke-width="1"/><path d="M12.5 0.5 V5 H17" fill="#e8eaec" stroke="#a8adb3" stroke-width="0.8"/><path d="M4 5 H10 M4 8 H14 M4 11 H14 M4 14 H13 M4 17 H10 M4 20 H9" stroke="#5a7a9a" stroke-width="1.1"/><path d="M9.5 21 L19.5 9 L21 10.5 L11 22 L9 22.5Z" fill="#f0d878" stroke="#9a7a30" stroke-width="0.7"/></svg>
<div class="" style="left:9px;top:22px;width:2px;height:2px;background:#8a94a0"></div>
<div class="" style="left:10px;top:24px;width:2px;height:1px;background:#fff"></div>
<div class="" style="left:9px;top:26px;width:2px;height:2px;background:#8a94a0"></div>
<div class="" style="left:10px;top:28px;width:2px;height:1px;background:#fff"></div>
<div class="" style="left:9px;top:30px;width:2px;height:2px;background:#8a94a0"></div>
<div class="" style="left:10px;top:32px;width:2px;height:1px;background:#fff"></div>
<div class="" style="left:9px;top:34px;width:2px;height:2px;background:#8a94a0"></div>
<div class="" style="left:10px;top:36px;width:2px;height:1px;background:#fff"></div>
<div class="" style="left:9px;top:38px;width:2px;height:2px;background:#8a94a0"></div>
<div class="" style="left:10px;top:40px;width:2px;height:1px;background:#fff"></div>
<div class="" style="left:9px;top:42px;width:2px;height:2px;background:#8a94a0"></div>
<div class="" style="left:10px;top:44px;width:2px;height:1px;background:#fff"></div>
<div class="" style="left:9px;top:46px;width:2px;height:2px;background:#8a94a0"></div>
<div class="" style="left:10px;top:48px;width:2px;height:1px;background:#fff"></div>
<div class="" style="left:210px;top:22px;width:2px;height:2px;background:#8a94a0"></div>
<div class="" style="left:211px;top:24px;width:2px;height:1px;background:#fff"></div>
<div class="" style="left:210px;top:26px;width:2px;height:2px;background:#8a94a0"></div>
<div class="" style="left:211px;top:28px;width:2px;height:1px;background:#fff"></div>
<div class="" style="left:210px;top:30px;width:2px;height:2px;background:#8a94a0"></div>
<div class="" style="left:211px;top:32px;width:2px;height:1px;background:#fff"></div>
<div class="" style="left:210px;top:34px;width:2px;height:2px;background:#8a94a0"></div>
<div class="" style="left:211px;top:36px;width:2px;height:1px;background:#fff"></div>
<div class="" style="left:210px;top:38px;width:2px;height:2px;background:#8a94a0"></div>
<div class="" style="left:211px;top:40px;width:2px;height:1px;background:#fff"></div>
<div class="" style="left:210px;top:42px;width:2px;height:2px;background:#8a94a0"></div>
<div class="" style="left:211px;top:44px;width:2px;height:1px;background:#fff"></div>
<div class="" style="left:210px;top:46px;width:2px;height:2px;background:#8a94a0"></div>
<div class="" style="left:211px;top:48px;width:2px;height:1px;background:#fff"></div>
<svg style="left:7px;top:983px" width="16" height="16" viewBox="0 0 16 16"><circle cx="8" cy="8" r="7.2" fill="#fbfbfb" stroke="#8a8a8a" stroke-width="1.5"/><path d="M3.2 9.5 A5 5 0 0 1 4.5 4.5" fill="none" stroke="#3a8a4a" stroke-width="1.2" stroke-dasharray="1,1"/><path d="M11 4 A5 5 0 0 1 12.8 8.5" fill="none" stroke="#d04040" stroke-width="1.2" stroke-dasharray="1,1"/><path d="M5 3.5 L10.5 11" stroke="#d83030" stroke-width="1.6" stroke-dasharray="2,0.8"/></svg>
<div class="" style="left:946px;top:992px;width:1px;height:1px;background:#808080;box-shadow:1px 1px 0 #ffffff"></div>
<div class="" style="left:943px;top:995px;width:1px;height:1px;background:#808080;box-shadow:1px 1px 0 #ffffff"></div>
<div class="" style="left:946px;top:995px;width:1px;height:1px;background:#808080;box-shadow:1px 1px 0 #ffffff"></div>
<div class="" style="left:940px;top:998px;width:1px;height:1px;background:#808080;box-shadow:1px 1px 0 #ffffff"></div>
<div class="" style="left:943px;top:998px;width:1px;height:1px;background:#808080;box-shadow:1px 1px 0 #ffffff"></div>
<div class="" style="left:946px;top:998px;width:1px;height:1px;background:#808080;box-shadow:1px 1px 0 #ffffff"></div></body></html>
